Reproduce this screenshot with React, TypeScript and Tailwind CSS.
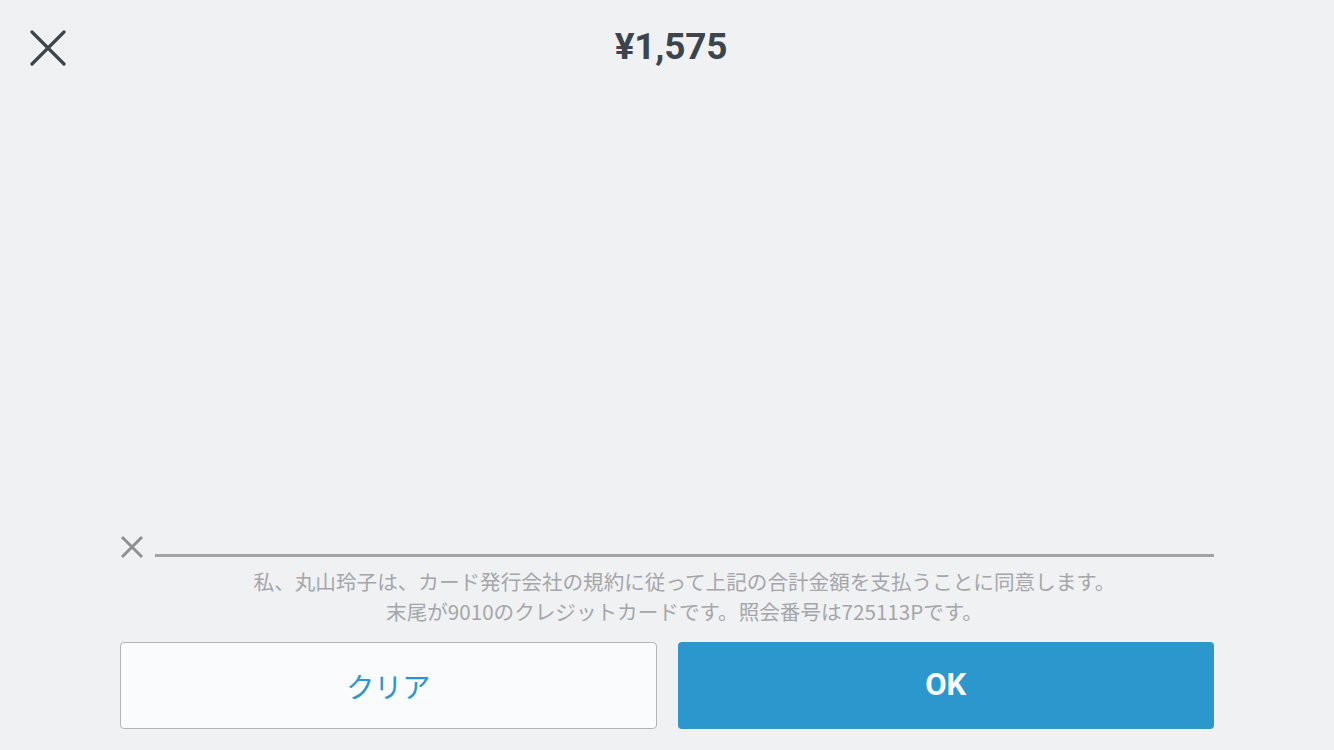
import React from "react";

export default function App() {
  return (
    <div
      className="w-[1334px] h-[750px] bg-[#f0f1f3] flex flex-col"
      style={{ fontFamily: "Roboto, 'Noto Sans CJK JP', sans-serif" }}
    >
      <header className="grid grid-cols-[1fr_auto_1fr] items-start">
        <div className="pl-[30px] pt-[30px]">
          <button className="block w-[36px] h-[36px]" aria-label="閉じる">
            <svg width="36" height="36" viewBox="0 0 36 36" fill="none">
              <path
                d="M2 2 L34 34 M34 2 L2 34"
                stroke="#3d444b"
                strokeWidth="3.2"
                strokeLinecap="round"
              />
            </svg>
          </button>
        </div>
        <h1 className="pt-[28px] pl-[8px] text-[37px] leading-none font-bold text-[#3d444b] tracking-[-0.2px]">
          ¥1,575
        </h1>
        <div />
      </header>

      <div className="flex-1" />

      <div className="px-[120px] pb-[21px]">
        <div className="flex items-end gap-[11px]">
          <svg width="24" height="24" viewBox="0 0 24 24" fill="none" className="block shrink-0">
            <path
              d="M2 2 L22 22 M22 2 L2 22"
              stroke="#8e9093"
              strokeWidth="3"
              strokeLinecap="butt"
            />
          </svg>
          <div className="flex-1 h-[3px] mb-[2px] bg-[#a2a4a8]" />
        </div>

        <div
          className="mt-[7px] ml-[35px] text-center text-[20.6px] leading-[30px] text-[#a5a6a9]"
          style={{ fontFamily: "'Noto Sans CJK JP', sans-serif" }}
        >
          <p>私、丸山玲子は、カード発行会社の規約に従って上記の合計金額を支払うことに同意します。</p>
          <p>末尾が9010のクレジットカードです。照会番号は725113Pです。</p>
        </div>

        <div className="mt-[16px] grid grid-cols-2 gap-[21px] h-[87px]">
          <button
            className="rounded-[4px] border border-[#b3b4b6] bg-[#fafbfc] text-[#2b96cb] text-[28px] flex items-center justify-center"
            style={{ fontFamily: "'Noto Sans CJK JP', sans-serif" }}
          >
            クリア
          </button>
          <button className="rounded-[4px] bg-[#2b97cc] text-white text-[31px] font-bold flex items-center justify-center">
            OK
          </button>
        </div>
      </div>
    </div>
  );
}
